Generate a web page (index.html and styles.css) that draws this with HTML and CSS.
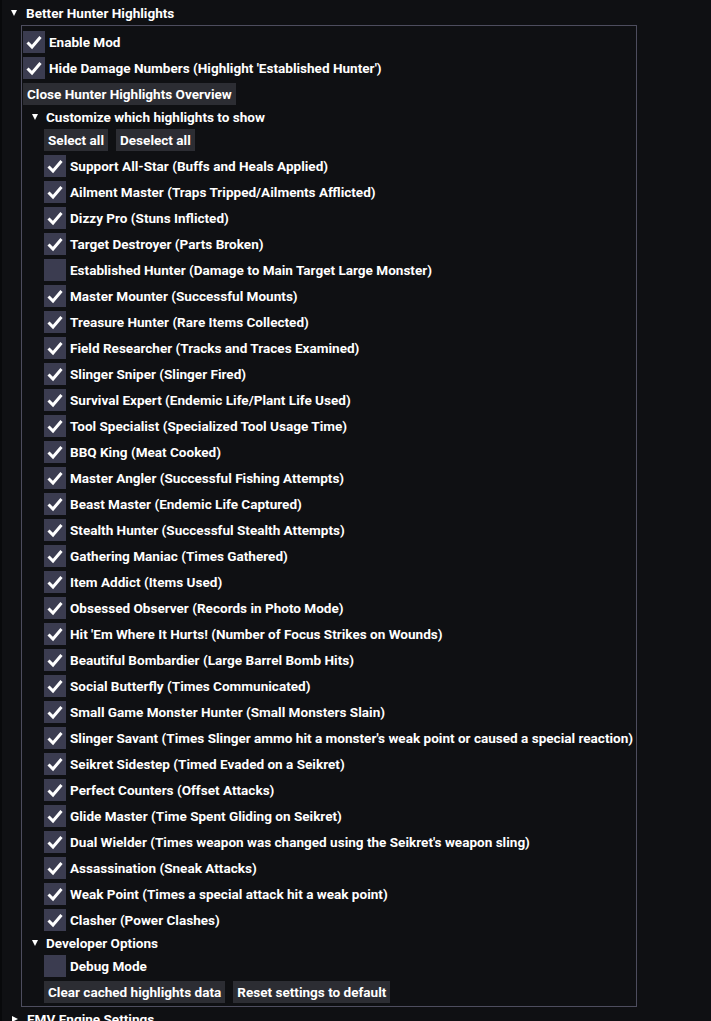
FILE: index.html
```html
<!DOCTYPE html>
<html>
<head>
<meta charset="utf-8">
<link rel="stylesheet" href="styles.css">
</head>
<body>
<div class="panel">
  <div class="node top"><span class="arrow down"></span><span class="label">Better Hunter Highlights</span></div>
  <div class="group">
    <div class="check on"><span class="box"><svg viewBox="0 0 22 22"><polyline points="4.5,11.5 9,16 17.5,6"/></svg></span><span class="label">Enable Mod</span></div>
    <div class="check on"><span class="box"><svg viewBox="0 0 22 22"><polyline points="4.5,11.5 9,16 17.5,6"/></svg></span><span class="label">Hide Damage Numbers (Highlight 'Established Hunter')</span></div>
    <div class="btnrow"><span class="btn">Close Hunter Highlights Overview</span></div>
    <div class="node sub"><span class="arrow down"></span><span class="label">Customize which highlights to show</span></div>
    <div class="inner">
      <div class="btnrow"><span class="btn">Select all</span><span class="btn">Deselect all</span></div>
      <div class="check on"><span class="box"><svg viewBox="0 0 22 22"><polyline points="4.5,11.5 9,16 17.5,6"/></svg></span><span class="label">Support All-Star (Buffs and Heals Applied)</span></div>
      <div class="check on"><span class="box"><svg viewBox="0 0 22 22"><polyline points="4.5,11.5 9,16 17.5,6"/></svg></span><span class="label">Ailment Master (Traps Tripped/Ailments Afflicted)</span></div>
      <div class="check on"><span class="box"><svg viewBox="0 0 22 22"><polyline points="4.5,11.5 9,16 17.5,6"/></svg></span><span class="label">Dizzy Pro (Stuns Inflicted)</span></div>
      <div class="check on"><span class="box"><svg viewBox="0 0 22 22"><polyline points="4.5,11.5 9,16 17.5,6"/></svg></span><span class="label">Target Destroyer (Parts Broken)</span></div>
      <div class="check"><span class="box"></span><span class="label">Established Hunter (Damage to Main Target Large Monster)</span></div>
      <div class="check on"><span class="box"><svg viewBox="0 0 22 22"><polyline points="4.5,11.5 9,16 17.5,6"/></svg></span><span class="label">Master Mounter (Successful Mounts)</span></div>
      <div class="check on"><span class="box"><svg viewBox="0 0 22 22"><polyline points="4.5,11.5 9,16 17.5,6"/></svg></span><span class="label">Treasure Hunter (Rare Items Collected)</span></div>
      <div class="check on"><span class="box"><svg viewBox="0 0 22 22"><polyline points="4.5,11.5 9,16 17.5,6"/></svg></span><span class="label">Field Researcher (Tracks and Traces Examined)</span></div>
      <div class="check on"><span class="box"><svg viewBox="0 0 22 22"><polyline points="4.5,11.5 9,16 17.5,6"/></svg></span><span class="label">Slinger Sniper (Slinger Fired)</span></div>
      <div class="check on"><span class="box"><svg viewBox="0 0 22 22"><polyline points="4.5,11.5 9,16 17.5,6"/></svg></span><span class="label">Survival Expert (Endemic Life/Plant Life Used)</span></div>
      <div class="check on"><span class="box"><svg viewBox="0 0 22 22"><polyline points="4.5,11.5 9,16 17.5,6"/></svg></span><span class="label">Tool Specialist (Specialized Tool Usage Time)</span></div>
      <div class="check on"><span class="box"><svg viewBox="0 0 22 22"><polyline points="4.5,11.5 9,16 17.5,6"/></svg></span><span class="label">BBQ King (Meat Cooked)</span></div>
      <div class="check on"><span class="box"><svg viewBox="0 0 22 22"><polyline points="4.5,11.5 9,16 17.5,6"/></svg></span><span class="label">Master Angler (Successful Fishing Attempts)</span></div>
      <div class="check on"><span class="box"><svg viewBox="0 0 22 22"><polyline points="4.5,11.5 9,16 17.5,6"/></svg></span><span class="label">Beast Master (Endemic Life Captured)</span></div>
      <div class="check on"><span class="box"><svg viewBox="0 0 22 22"><polyline points="4.5,11.5 9,16 17.5,6"/></svg></span><span class="label">Stealth Hunter (Successful Stealth Attempts)</span></div>
      <div class="check on"><span class="box"><svg viewBox="0 0 22 22"><polyline points="4.5,11.5 9,16 17.5,6"/></svg></span><span class="label">Gathering Maniac (Times Gathered)</span></div>
      <div class="check on"><span class="box"><svg viewBox="0 0 22 22"><polyline points="4.5,11.5 9,16 17.5,6"/></svg></span><span class="label">Item Addict (Items Used)</span></div>
      <div class="check on"><span class="box"><svg viewBox="0 0 22 22"><polyline points="4.5,11.5 9,16 17.5,6"/></svg></span><span class="label">Obsessed Observer (Records in Photo Mode)</span></div>
      <div class="check on"><span class="box"><svg viewBox="0 0 22 22"><polyline points="4.5,11.5 9,16 17.5,6"/></svg></span><span class="label">Hit 'Em Where It Hurts! (Number of Focus Strikes on Wounds)</span></div>
      <div class="check on"><span class="box"><svg viewBox="0 0 22 22"><polyline points="4.5,11.5 9,16 17.5,6"/></svg></span><span class="label">Beautiful Bombardier (Large Barrel Bomb Hits)</span></div>
      <div class="check on"><span class="box"><svg viewBox="0 0 22 22"><polyline points="4.5,11.5 9,16 17.5,6"/></svg></span><span class="label">Social Butterfly (Times Communicated)</span></div>
      <div class="check on"><span class="box"><svg viewBox="0 0 22 22"><polyline points="4.5,11.5 9,16 17.5,6"/></svg></span><span class="label">Small Game Monster Hunter (Small Monsters Slain)</span></div>
      <div class="check on"><span class="box"><svg viewBox="0 0 22 22"><polyline points="4.5,11.5 9,16 17.5,6"/></svg></span><span class="label">Slinger Savant (Times Slinger ammo hit a monster's weak point or caused a special reaction)</span></div>
      <div class="check on"><span class="box"><svg viewBox="0 0 22 22"><polyline points="4.5,11.5 9,16 17.5,6"/></svg></span><span class="label">Seikret Sidestep (Timed Evaded on a Seikret)</span></div>
      <div class="check on"><span class="box"><svg viewBox="0 0 22 22"><polyline points="4.5,11.5 9,16 17.5,6"/></svg></span><span class="label">Perfect Counters (Offset Attacks)</span></div>
      <div class="check on"><span class="box"><svg viewBox="0 0 22 22"><polyline points="4.5,11.5 9,16 17.5,6"/></svg></span><span class="label">Glide Master (Time Spent Gliding on Seikret)</span></div>
      <div class="check on"><span class="box"><svg viewBox="0 0 22 22"><polyline points="4.5,11.5 9,16 17.5,6"/></svg></span><span class="label">Dual Wielder (Times weapon was changed using the Seikret's weapon sling)</span></div>
      <div class="check on"><span class="box"><svg viewBox="0 0 22 22"><polyline points="4.5,11.5 9,16 17.5,6"/></svg></span><span class="label">Assassination (Sneak Attacks)</span></div>
      <div class="check on"><span class="box"><svg viewBox="0 0 22 22"><polyline points="4.5,11.5 9,16 17.5,6"/></svg></span><span class="label">Weak Point (Times a special attack hit a weak point)</span></div>
      <div class="check on"><span class="box"><svg viewBox="0 0 22 22"><polyline points="4.5,11.5 9,16 17.5,6"/></svg></span><span class="label">Clasher (Power Clashes)</span></div>
    </div>
    <div class="node sub"><span class="arrow down"></span><span class="label">Developer Options</span></div>
    <div class="inner">
      <div class="check"><span class="box"></span><span class="label">Debug Mode</span></div>
      <div class="btnrow"><span class="btn">Clear cached highlights data</span><span class="btn">Reset settings to default</span></div>
    </div>
  </div>
  <div class="node top"><span class="arrow right"></span><span class="label">EMV Engine Settings</span></div>
</div>
</body>
</html>
```

FILE: styles.css
```css
html, body {
  margin: 0;
  padding: 0;
  background: #0f1013;
  height: 100%;
  overflow: hidden;
}
body {
  font-family: Roboto, "Liberation Sans", sans-serif;
  font-weight: 700;
  font-size: 13.55px;
  color: #ffffff;
  border-left: 2px solid #08090b;
}
.panel {
  display: flex;
  flex-direction: column;
  gap: 4px;
  padding: 5px 0 0 7px;
}
.node {
  display: flex;
  align-items: center;
  height: 16px;
  line-height: 16px;
  white-space: nowrap;
}
.node.top .arrow { margin-left: 2px; margin-right: 9px; }
.node.sub { padding-left: 9px; }
.node.sub .arrow { margin-right: 8px; }
.arrow {
  width: 0;
  height: 0;
  flex: none;
}
.arrow.down {
  border-left: 3.5px solid transparent;
  border-right: 3.5px solid transparent;
  border-top: 6px solid #ffffff;
}
.arrow.right {
  border-top: 3.5px solid transparent;
  border-bottom: 3.5px solid transparent;
  border-left: 6px solid #ffffff;
}
.node.top .arrow.right { margin-left: 3px; margin-right: 9px; }
.group {
  margin-left: 12px;
  width: 613px;
  border: 1px solid #4d4d5e;
  padding: 5px 0 3px 1px;
  display: flex;
  flex-direction: column;
  gap: 4px;
}
.inner {
  display: flex;
  flex-direction: column;
  gap: 4px;
  padding-left: 21px;
}
.check {
  display: flex;
  align-items: center;
  height: 22px;
  white-space: nowrap;
}
.box {
  width: 22px;
  height: 22px;
  background: #3b3c50;
  flex: none;
  margin-right: 4px;
  display: block;
}
.box svg {
  width: 22px;
  height: 22px;
  display: block;
}
.box polyline {
  fill: none;
  stroke: #ffffff;
  stroke-width: 3;
  stroke-linecap: butt;
  stroke-linejoin: miter;
}
.btnrow {
  display: flex;
  gap: 8px;
}
.btn {
  background: #2c2d33;
  height: 22px;
  line-height: 22px;
  padding: 0 4px;
  white-space: nowrap;
}
```
